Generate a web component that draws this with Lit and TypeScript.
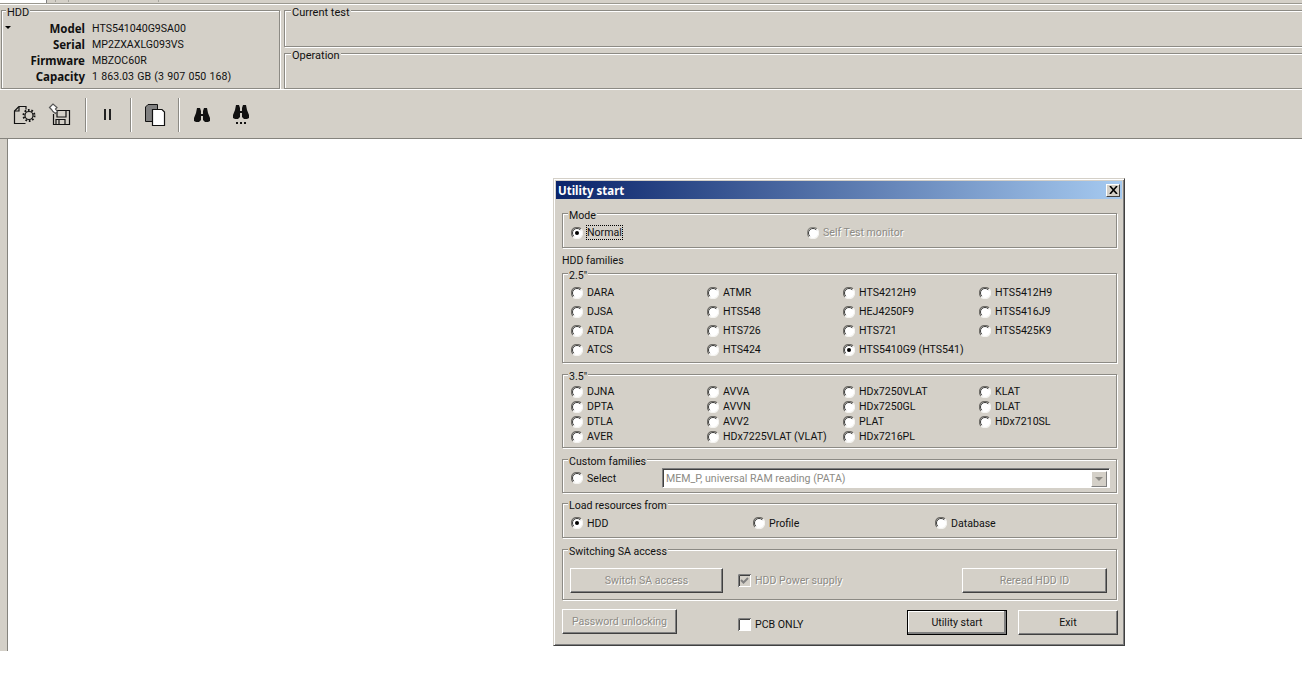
import { LitElement, html, css, svg } from 'lit';
import { customElement } from 'lit/decorators.js';

const FAMILIES_25 = [
  ['DARA', 'ATMR', 'HTS4212H9', 'HTS5412H9'],
  ['DJSA', 'HTS548', 'HEJ4250F9', 'HTS5416J9'],
  ['ATDA', 'HTS726', 'HTS721', 'HTS5425K9'],
  ['ATCS', 'HTS424', 'HTS5410G9 (HTS541)', ''],
];

const FAMILIES_35 = [
  ['DJNA', 'AVVA', 'HDx7250VLAT', 'KLAT'],
  ['DPTA', 'AVVN', 'HDx7250GL', 'DLAT'],
  ['DTLA', 'AVV2', 'PLAT', 'HDx7210SL'],
  ['AVER', 'HDx7225VLAT (VLAT)', 'HDx7216PL', ''],
];

const HDD_INFO = [
  ['Model', 'HTS541040G9SA00'],
  ['Serial', 'MP2ZXAXLG093VS'],
  ['Firmware', 'MBZOC60R'],
  ['Capacity', '1 863.03 GB (3 907 050 168)'],
];

@customElement('app-root')
export class AppRoot extends LitElement {
  static styles = css`
    :host {
      display: block;
      width: 1302px;
      height: 683px;
      background: #fff;
      overflow: hidden;
      font-family: Roboto, 'Liberation Sans', sans-serif;
      font-size: 10.6px;
      line-height: 13px;
      color: #111;
    }

    .app {
      position: relative;
      height: 651px;
      background: #d4d0c8;
      display: flex;
      flex-direction: column;
    }

    /* stub of the tab strip cut off by the top of the picture */
    .strip {
      height: 3px;
      flex: none;
      display: flex;
      border-bottom: 1px solid #9a9890;
      box-shadow: 0 1px 0 #fff;
      margin-bottom: 6px;
    }

    .strip .tab {
      width: 46px;
      background: #fff;
      border-right: 1px solid #808080;
    }

    .strip .mark {
      width: 1px;
      height: 2px;
      background: #a8a69f;
    }

    .header {
      display: flex;
      height: 79px;
      flex: none;
      gap: 4px;
      padding-left: 1px;
    }

    .group {
      position: relative;
      border: 1px solid #8c8a84;
      box-shadow: 1px 1px 0 #fff, inset 1px 1px 0 #fff;
      box-sizing: border-box;
    }

    .legend {
      position: absolute;
      top: -5px;
      left: 5px;
      padding: 0 1px;
      background: #d4d0c8;
      white-space: nowrap;
    }

    .status .legend {
      left: 6px;
      font-size: 11px;
    }

    .hdd {
      width: 279px;
      padding-top: 10px;
      display: grid;
      grid-template-columns: 83px auto;
      grid-auto-rows: 16px;
      column-gap: 7px;
      align-content: start;
    }

    .hdd .legend {
      left: 4px;
      font-size: 11px;
    }

    .hdd .arrow {
      position: absolute;
      left: 3px;
      top: 15px;
      width: 0;
      height: 0;
      border: 3px solid transparent;
      border-top: 3px solid #000;
      border-bottom: 0;
    }

    .hdd b {
      font-family: 'Noto Sans', sans-serif;
      font-size: 11.5px;
      text-align: right;
      line-height: 16px;
    }

    .hdd span.value {
      line-height: 16px;
      white-space: nowrap;
      word-spacing: 0.7px;
    }

    .status {
      flex: 1;
      display: flex;
      flex-direction: column;
      gap: 6px;
      min-width: 0;
    }

    .status .group {
      flex: 1;
      border-right: 0;
    }

    .toolbar {
      flex: none;
      height: 50px;
      display: flex;
      align-items: center;
      border-top: 1px solid #fff;
      box-sizing: border-box;
      padding: 1px 0 0 12px;
      border-bottom: 1px solid #85837d;
    }

    .toolbar svg {
      display: block;
      flex: none;
    }

    .sep {
      width: 1px;
      height: 34px;
      background: #8c8a84;
      box-shadow: 1px 0 0 #fff;
      flex: none;
    }

    .workspace {
      flex: 1;
      background: #fff;
      margin-left: 7px;
      border-left: 1px solid #85837d;
    }

    .dialog {
      position: absolute;
      left: 553px;
      top: 178px;
      width: 572px;
      height: 468px;
      box-sizing: border-box;
      background: #d4d0c8;
      border: 1px solid;
      border-color: #d4d0c8 #404040 #404040 #d4d0c8;
      box-shadow: inset 1px 1px 0 #fff, inset -1px -1px 0 #808080;
      padding: 2px 2px 0 2px;
    }

    .title {
      height: 18px;
      margin-bottom: 14px;
      display: flex;
      align-items: center;
      justify-content: space-between;
      padding: 0 2px 0 2px;
      box-sizing: border-box;
      background: linear-gradient(90deg, #0a246a, #a6caf0);
      color: #fff;
      font-family: 'Noto Sans', sans-serif;
      font-weight: 700;
      font-size: 11.5px;
    }

    .close {
      width: 14px;
      height: 13px;
      display: flex;
      align-items: center;
      justify-content: center;
      background: #d4d0c8;
      border: 1px solid;
      border-color: #fff #404040 #404040 #fff;
      box-sizing: border-box;
    }

    .body {
      padding: 0 5px 0 6px;
    }

    .body .group {
      margin-bottom: 11px;
    }

    .mode {
      height: 35px;
      padding: 4px 0 0 8px;
      margin-bottom: 5px !important;
      display: grid;
      grid-template-columns: 236px auto;
      align-items: center;
    }

    .families-label {
      height: 13px;
      line-height: 15px;
      margin-bottom: 7px;
    }

    .radio-grid {
      display: grid;
      grid-template-columns: repeat(4, 136px);
      padding: 0 0 0 8px;
      align-items: center;
    }

    .g25 {
      height: 90px;
      grid-auto-rows: 19px;
      padding-top: 9px;
    }

    .g35 {
      height: 74px;
      grid-auto-rows: 15px;
      padding-top: 9px;
    }

    .radio {
      display: inline-flex;
      align-items: center;
      gap: 4px;
      white-space: nowrap;
    }

    .radio svg {
      flex: none;
      display: block;
    }

    .radio.disabled span,
    .disabled-text {
      color: #8d8b85;
      text-shadow: 1px 1px 0 #fff;
    }

    .focus {
      outline: 1px dotted #000;
      outline-offset: 0;
    }

    .custom {
      height: 34px;
      display: flex;
      align-items: center;
      padding: 4px 6px 0 8px;
      margin-bottom: 10px !important;
    }

    .custom .radio {
      width: 91px;
    }

    .select {
      flex: 1;
      height: 20px;
      box-sizing: border-box;
      border: 1px solid;
      border-color: #808080 #fff #fff #808080;
      box-shadow: inset 1px 1px 0 #404040;
      background: #fff;
      color: #8d8b85;
      display: flex;
      align-items: center;
      justify-content: space-between;
      padding: 2px 2px 1px 3px;
    }

    .select i {
      width: 16px;
      height: 16px;
      box-sizing: border-box;
      background: #d4d0c8;
      border: 1px solid;
      border-color: #fff #808080 #808080 #fff;
      display: flex;
      align-items: center;
      justify-content: center;
    }

    .select i::after {
      content: '';
      border: 4px solid transparent;
      border-top: 4px solid #8d8b85;
      border-bottom: 0;
    }

    .load {
      height: 35px;
      display: grid;
      grid-template-columns: repeat(3, 182px);
      align-items: center;
      padding: 5px 0 0 8px;
    }

    .switching {
      height: 51px;
      display: flex;
      align-items: flex-start;
      padding: 18px 9px 0 7px;
      margin-bottom: 9px !important;
    }

    .button {
      height: 25px;
      box-sizing: border-box;
      display: flex;
      align-items: center;
      justify-content: center;
      background: #d4d0c8;
      border: 1px solid;
      border-color: #fff #404040 #404040 #fff;
      box-shadow: inset -1px -1px 0 #808080;
    }

    .button.disabled {
      color: #8d8b85;
      text-shadow: 1px 1px 0 #fff;
    }

    .button.default {
      outline: 1px solid #000;
      outline-offset: -1px;
      box-shadow: inset -2px -2px 0 #808080, inset 1px 1px 0 #fff;
    }

    .check {
      display: inline-flex;
      align-items: center;
      gap: 4px;
      white-space: nowrap;
    }

    .check svg {
      flex: none;
      display: block;
    }

    .footer {
      display: flex;
      align-items: flex-start;
      height: 26px;
      margin-right: -1px;
    }

    .w-switch { width: 153px; }
    .w-reread { width: 145px; margin-left: auto; }
    .w-password { width: 115px; margin-right: 61px; }
    .w-action { width: 100px; margin-left: auto; margin-top: 1px; }
    .w-exit { width: 100px; margin-left: 11px; margin-top: 1px; }
    .switching .check { margin: 6px 0 0 15px; }
    .footer .check { margin-top: 9px; }
  `;

  private radio(label: string, checked = false, disabled = false, focused = false) {
    if (!label) return html`<span></span>`;
    const edge = disabled ? '#8d8b85' : '#6f6d68';
    return html`<label class="radio ${disabled ? 'disabled' : ''}">
      <svg width="12" height="12" viewBox="0 0 12 12">
        <circle cx="6" cy="6" r="5.5" fill="#fff" />
        <path d="M10 2A5.500 5.500 0 0 0 2 10" fill="none" stroke=${edge} stroke-width="1.2" />
        <path d="M9.200 2.800A4.500 4.500 0 0 0 2.800 9.200" fill="none" stroke="#3a3a38" stroke-width="1" />
        <path d="M2 10A5.500 5.500 0 0 0 10 2" fill="none" stroke="#f4f3f0" stroke-width="1.2" />
        ${checked ? svg`<circle cx="6" cy="6" r="2" fill="#000" />` : ''}
      </svg>
      <span class=${focused ? 'focus' : ''}>${label}</span>
    </label>`;
  }

  private check(label: string, checked: boolean, disabled: boolean) {
    return html`<label class="check">
      <svg width="13" height="13" viewBox="0 0 13 13">
        <rect width="13" height="13" fill="#fff" />
        <path d="M.5 13V.5H13" fill="none" stroke="#808080" />
        <path d="M1.500 12V1.500H12" fill="none" stroke="#404040" />
        ${disabled ? svg`<rect x="2" y="2" width="10" height="10" fill="#d4d0c8" />` : ''}
        ${checked
          ? svg`<path d="M3 6l2.500 2.500L10 4" fill="none" stroke="#808080" stroke-width="2" />`
          : ''}
      </svg>
      <span class=${disabled ? 'disabled-text' : ''}>${label}</span>
    </label>`;
  }

  private grid(rows: string[][], cls: string, checked = '') {
    return html`<div class="group radio-grid ${cls}">
      <span class="legend">${cls === 'g25' ? '2.5"' : '3.5"'}</span>
      ${rows.flat().map((name) => this.radio(name, name === checked))}
    </div>`;
  }

  private toolbarIcons() {
    return html`
      <svg width="24" height="22" viewBox="0 0 24 22" fill="none" stroke="#111" stroke-width="1.2">
        <path d="M7 2.500h7v3M7 2.500L2.500 7v12.500h11" />
        <path d="M7 2.500V7H2.500" />
        <circle cx="17" cy="11.500" r="4" />
        <circle cx="17" cy="11.500" r="5.500" stroke-width="2" stroke-dasharray="1.700 1.750" />
      </svg>
      <svg style="margin-left:12px" width="24" height="24" viewBox="0 0 24 24" fill="none" stroke="#111" stroke-width="1.2">
        <path d="M7 7.500h14.500v14H5.500V11" />
        <path d="M9 8v6h9V8M8 21.500v-5h9v5M11 17v4" />
        <path d="M1.500 4.500L5 1l4 3.500-1.500 1.500 2 2.500-2 2-2.500-2L3.500 6.500z" stroke="#555" fill="#fff" />
      </svg>
      <div class="sep" style="margin-left:13px"></div>
      <svg style="margin-left:18px" width="7" height="11" viewBox="0 0 7 11" fill="#222">
        <rect x="0" width="2" height="11" /><rect x="5" width="2" height="11" />
      </svg>
      <div class="sep" style="margin-left:19px"></div>
      <svg style="margin-left:13px" width="22" height="24" viewBox="0 0 22 24">
        <path d="M1.500 4L4 1.500h9.500v17h-12z" fill="#808080" stroke="#111" />
        <path d="M9 6.500h9l2.500 2.500v13.500H8.500V6.500z" fill="#fff" stroke="#111" stroke-width="1.2" />
      </svg>
      <div class="sep" style="margin-left:12px"></div>
      <svg style="margin-left:15px" width="16" height="16" viewBox="0 0 16 16" fill="#111">
        <path d="M3 1h3l1 3v3h2V4l1-3h3l1 5 2 5v3l-2 1h-3l-2-2V9H7v4l-2 2H2l-2-1v-3l2-5z" />
      </svg>
      <svg style="margin-left:23px" width="16" height="21" viewBox="0 0 16 21" fill="#111">
        <path d="M3 1h3l1 3v3h2V4l1-3h3l1 5 2 5v3l-2 1h-3l-2-2V9H7v4l-2 2H2l-2-1v-3l2-5z" />
        <rect x="3" y="18" width="2" height="2" /><rect x="7" y="18" width="2" height="2" /><rect x="11" y="18" width="2" height="2" />
      </svg>
    `;
  }

  render() {
    return html`
      <div class="app">
        <div class="strip">
          <div class="tab"></div>
          <div class="mark" style="margin-left:8px"></div>
          <div class="mark" style="margin-left:12px"></div>
          <div class="mark" style="margin-left:89px"></div>
        </div>
        <div class="header">
          <div class="group hdd">
            <span class="legend">HDD</span>
            <span class="arrow"></span>
            ${HDD_INFO.map(([k, v]) => html`<b>${k}</b><span class="value">${v}</span>`)}
          </div>
          <div class="status">
            <div class="group"><span class="legend">Current test</span></div>
            <div class="group"><span class="legend">Operation</span></div>
          </div>
        </div>
        <div class="toolbar">${this.toolbarIcons()}</div>
        <div class="workspace"></div>

        <div class="dialog">
          <div class="title">
            <span>Utility start</span>
            <span class="close">
              <svg width="9" height="8" viewBox="0 0 9 8" stroke="#000" stroke-width="1.600">
                <path d="M1 0l7 8M8 0L1 8" />
              </svg>
            </span>
          </div>
          <div class="body">
            <div class="group mode">
              <span class="legend">Mode</span>
              ${this.radio('Normal', true, false, true)}
              ${this.radio('Self Test monitor', false, true)}
            </div>
            <div class="families-label">HDD families</div>
            ${this.grid(FAMILIES_25, 'g25', 'HTS5410G9 (HTS541)')}
            ${this.grid(FAMILIES_35, 'g35')}
            <div class="group custom">
              <span class="legend">Custom families</span>
              ${this.radio('Select')}
              <div class="select"><span>MEM_P, universal RAM reading (PATA)</span><i></i></div>
            </div>
            <div class="group load">
              <span class="legend">Load resources from</span>
              ${this.radio('HDD', true)} ${this.radio('Profile')} ${this.radio('Database')}
            </div>
            <div class="group switching">
              <span class="legend">Switching SA access</span>
              <div class="button disabled w-switch">Switch SA access</div>
              ${this.check('HDD Power supply', true, true)}
              <div class="button disabled w-reread">Reread HDD ID</div>
            </div>
            <div class="footer">
              <div class="button disabled w-password">Password unlocking</div>
              ${this.check('PCB ONLY', false, false)}
              <div class="button default w-action">Utility start</div>
              <div class="button w-exit">Exit</div>
            </div>
          </div>
        </div>
      </div>
    `;
  }
}
